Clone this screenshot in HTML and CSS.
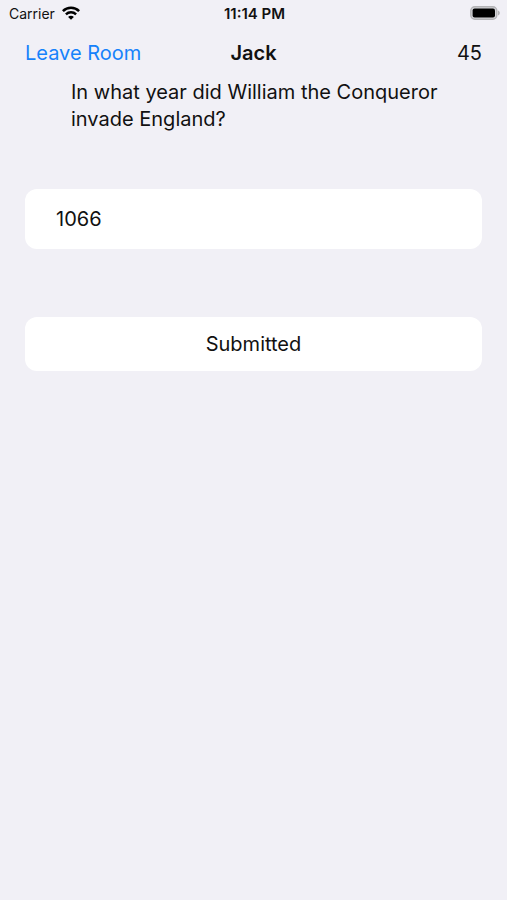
FILE: index.html
```html
<!DOCTYPE html>
<html lang="en">
<head>
<meta charset="UTF-8">
<meta name="viewport" content="width=device-width, initial-scale=1.0">
<title>Quiz Room</title>
<link rel="stylesheet" href="styles.css">
</head>
<body>
<div class="status-bar">
<div class="carrier">
<span>Carrier</span>
<svg class="wifi" viewBox="0 0 18 14" aria-hidden="true">
<path d="M0.9 5.1a11.6 11.6 0 0 1 16.2 0" fill="none" stroke="#000" stroke-width="2.6"/>
<path d="M3.9 8.3a7.2 7.2 0 0 1 10.2 0" fill="none" stroke="#000" stroke-width="2.4"/>
<path d="M9 13.8L6.1 10.9a4 4 0 0 1 5.8 0z"/>
</svg>
</div>
<time class="clock">11:14 PM</time>
<svg class="battery" viewBox="0 0 30 14" aria-hidden="true">
<rect x="0.8" y="0.8" width="26" height="12.4" rx="4" fill="#d4d4d8" stroke="#b3b3b6" stroke-width="1.4"/>
<rect x="2.6" y="2.4" width="22.4" height="9.2" rx="2"/>
<path d="M28 4.6c2.4.8 2.4 4 0 4.8z" fill="#b3b3b6"/>
</svg>
</div>
<header class="nav">
<a class="leave" href="#">Leave Room</a>
<h1>Jack</h1>
<span class="timer">45</span>
</header>
<main>
<form id="answerForm">
<label class="question" for="answer">In what year did William the Conqueror invade England?</label>
<input class="answer" type="text" id="answer" value="1066">
<button class="submit" type="button">Submitted</button>
</form>
</main>
</body>
</html>
```

FILE: styles.css
```css
body {
font-family: Inter, "Liberation Sans", sans-serif;
background-color: #f1f0f6;
color: #111;
margin: 0;
}
.status-bar {
display: grid;
grid-template-columns: 1fr auto 1fr;
align-items: center;
height: 26px;
padding: 0 7px 0 9px;
font-size: 14px;
}
.carrier {
display: flex;
align-items: center;
gap: 7px;
}
.wifi {
width: 18px;
height: 14px;
}
.clock {
font-size: 15px;
font-weight: 600;
}
.battery {
width: 30px;
height: 14px;
justify-self: end;
}
.nav {
display: grid;
grid-template-columns: 1fr auto 1fr;
align-items: center;
height: 53px;
padding: 0 25px;
font-size: 20px;
}
.leave {
color: #1682fb;
text-decoration: none;
}
h1 {
margin: 0;
font-size: 20px;
font-weight: 600;
}
.timer {
text-align: right;
}
form {
display: flex;
flex-direction: column;
padding: 0 25px;
}
.question {
padding: 0 30px 0 46px;
margin-bottom: 56px;
font-size: 20px;
line-height: 27px;
}
.answer, .submit {
width: 100%;
box-sizing: border-box;
border: none;
border-radius: 12px;
background-color: #fff;
color: #111;
font-family: inherit;
font-size: 20px;
}
.answer {
height: 60px;
padding: 0 31px;
margin-bottom: 68px;
}
.submit {
height: 54px;
cursor: pointer;
}
```
